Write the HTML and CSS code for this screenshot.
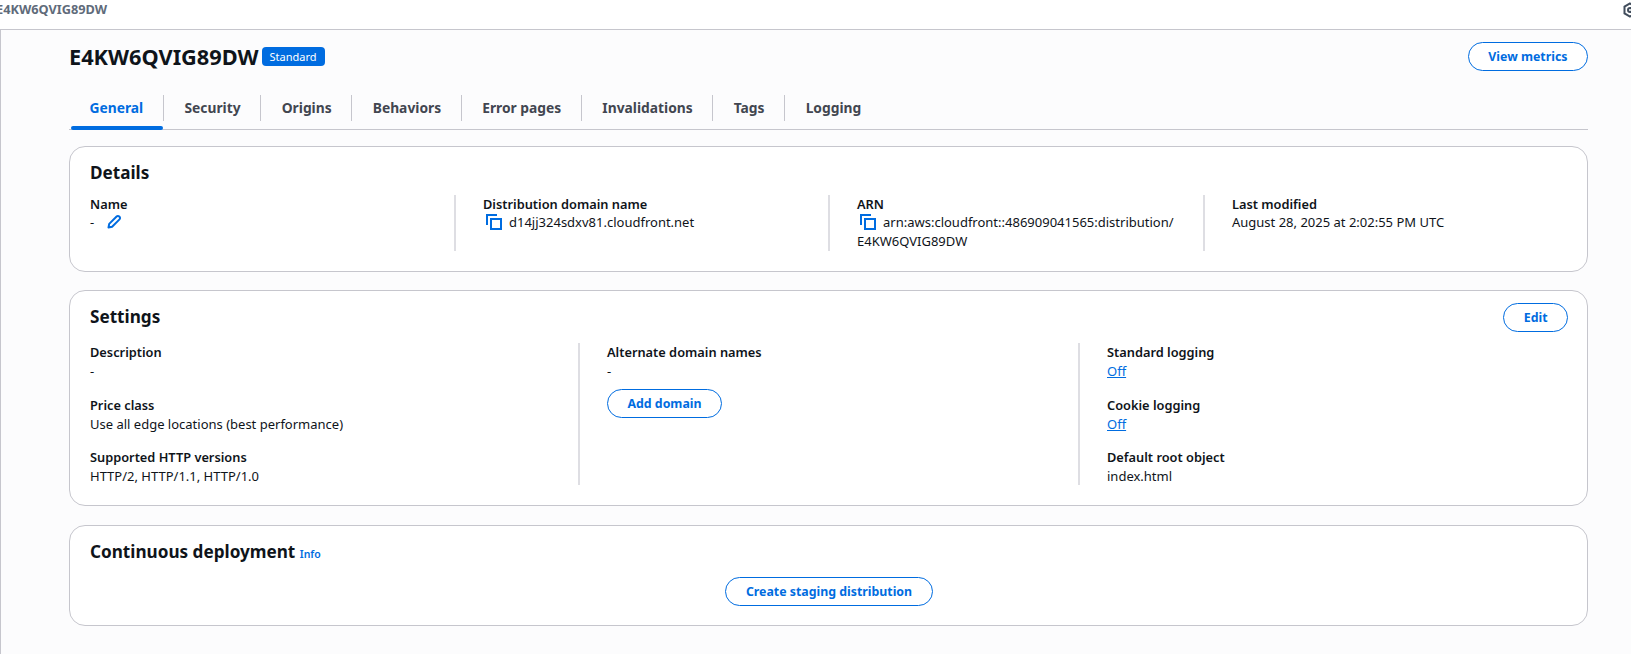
FILE: index.html
```html
<!DOCTYPE html>
<html>
<head>
  <title>E4KW6QVIG89DW</title>
  <link rel="stylesheet" href="styles.css">
</head>
<body>
  <div class="topbar">
    <span class="topbar-title">E4KW6QVIG89DW</span>
    <svg class="topbar-icon" width="16" height="16" viewBox="0 0 16 16"><path d="M8 1.5 13.5 4.7v6.6L8 14.5 2.5 11.3V4.7z" fill="none" stroke="#414d5c" stroke-width="2"/><circle cx="8" cy="8" r="2" fill="none" stroke="#414d5c" stroke-width="2"/></svg>
  </div>
  <div class="content">
    <div class="page-head">
      <div class="page-title">
        <h1>E4KW6QVIG89DW</h1>
        <span class="badge">Standard</span>
      </div>
      <button class="btn">View metrics</button>
    </div>

    <div class="tabs">
      <a class="tab active">General</a>
      <a class="tab">Security</a>
      <a class="tab">Origins</a>
      <a class="tab">Behaviors</a>
      <a class="tab">Error pages</a>
      <a class="tab">Invalidations</a>
      <a class="tab">Tags</a>
      <a class="tab">Logging</a>
    </div>

    <div class="card details">
      <h2>Details</h2>
      <div class="columns details-columns">
        <div class="col">
          <div class="field">
            <div class="label">Name</div>
            <div class="value">-
              <svg class="edit-icon" width="16" height="16" viewBox="0 0 16 16"><path d="M2.5 13.5l.7-3.6L10.6 2.5a1.8 1.8 0 0 1 2.6 0l.3.3a1.8 1.8 0 0 1 0 2.6L6.100 12.800z" fill="none" stroke="#006ce0" stroke-width="2" stroke-linejoin="round"/></svg>
            </div>
          </div>
        </div>
        <div class="col">
          <div class="field">
            <div class="label">Distribution domain name</div>
            <div class="value">
              <svg class="copy-icon" width="16" height="16" viewBox="0 0 16 16"><path d="M1 11V1h10" fill="none" stroke="#006ce0" stroke-width="2"/><rect x="5" y="5" width="10" height="10" fill="none" stroke="#006ce0" stroke-width="2"/></svg>d14jj324sdxv81.cloudfront.net
            </div>
          </div>
        </div>
        <div class="col">
          <div class="field">
            <div class="label">ARN</div>
            <div class="value">
              <svg class="copy-icon" width="16" height="16" viewBox="0 0 16 16"><path d="M1 11V1h10" fill="none" stroke="#006ce0" stroke-width="2"/><rect x="5" y="5" width="10" height="10" fill="none" stroke="#006ce0" stroke-width="2"/></svg>arn:aws:cloudfront::486909041565:distribution/<br>E4KW6QVIG89DW
            </div>
          </div>
        </div>
        <div class="col">
          <div class="field">
            <div class="label">Last modified</div>
            <div class="value">August 28, 2025 at 2:02:55 PM UTC</div>
          </div>
        </div>
      </div>
    </div>

    <div class="card settings">
      <div class="card-head">
        <h2>Settings</h2>
        <button class="btn">Edit</button>
      </div>
      <div class="columns settings-columns">
        <div class="col">
          <div class="field">
            <div class="label">Description</div>
            <div class="value">-</div>
          </div>
          <div class="field">
            <div class="label">Price class</div>
            <div class="value">Use all edge locations (best performance)</div>
          </div>
          <div class="field">
            <div class="label">Supported HTTP versions</div>
            <div class="value">HTTP/2, HTTP/1.1, HTTP/1.0</div>
          </div>
        </div>
        <div class="col">
          <div class="field">
            <div class="label">Alternate domain names</div>
            <div class="value">-</div>
          </div>
          <button class="btn add-domain">Add domain</button>
        </div>
        <div class="col">
          <div class="field">
            <div class="label">Standard logging</div>
            <div class="value"><a class="link">Off</a></div>
          </div>
          <div class="field">
            <div class="label">Cookie logging</div>
            <div class="value"><a class="link">Off</a></div>
          </div>
          <div class="field">
            <div class="label">Default root object</div>
            <div class="value">index.html</div>
          </div>
        </div>
      </div>
    </div>

    <div class="card deployment">
      <h2>Continuous deployment <a class="info">Info</a></h2>
      <div class="center">
        <button class="btn">Create staging distribution</button>
      </div>
    </div>
  </div>
</body>
</html>
```

FILE: styles.css
```css
* {
  box-sizing: border-box;
}

html, body {
  height: 100%;
}

body {
  margin: 0;
  background-color: #fff;
  color: #0f141a;
  font-family: "Noto Sans", sans-serif;
  font-size: 13px;
  line-height: 20px;
  overflow: hidden;
}

.topbar {
  display: flex;
  justify-content: space-between;
  align-items: flex-start;
  height: 30px;
  border-bottom: 1px solid #c6c6cd;
  overflow: hidden;
}

.topbar-title {
  margin: 0 0 0 -4px;
  color: #5f6b7a;
  font-size: 12.750px;
  font-weight: 700;
  line-height: 19px;
}

.topbar-icon {
  margin: 2px -7px 0 0;
}

.content {
  height: 624px;
  padding: 0 43px 0 68px;
  border-left: 1px solid #c6c6cd;
  background-color: #fcfcfd;
}

.page-head {
  display: flex;
  justify-content: space-between;
  align-items: center;
  padding-top: 12px;
}

.page-title {
  display: flex;
  align-items: center;
  gap: 3px;
}

h1 {
  margin: 0;
  font-size: 21.750px;
  font-weight: 700;
  line-height: 28px;
}

.badge {
  padding: 0 8px;
  border-radius: 4px;
  background-color: #006ce0;
  color: #fff;
  font-size: 11px;
  line-height: 19px;
}

.btn {
  height: 29px;
  padding: 0 19.500px;
  border: 1px solid #006ce0;
  border-radius: 20px;
  background-color: #fff;
  color: #006ce0;
  font-family: inherit;
  font-size: 12.350px;
  font-weight: 700;
}

.tabs {
  display: flex;
  height: 35px;
  margin: 24px 0 0 0;
  border-bottom: 1px solid #c6c6cd;
}

.tab {
  position: relative;
  height: 26px;
  padding: 0 19.600px 0 20.500px;
  border-left: 1px solid #c6c6cd;
  color: #424650;
  font-size: 13.800px;
  font-weight: 700;
  line-height: 26px;
}

.tab.active {
  width: 94px;
  border-left: 0;
  color: #006ce0;
}

.tab.active::after {
  content: "";
  position: absolute;
  left: 2px;
  right: 0;
  top: 31px;
  height: 4px;
  border-radius: 2px;
  background-color: #006ce0;
}

.card {
  margin-top: 18px;
  padding: 14px 19px 15px 20px;
  border: 1px solid #c6c6cd;
  border-radius: 16px;
  background-color: #fff;
}

.details {
  height: 126px;
  margin-top: 16px;
}

.settings {
  height: 216px;
}

.deployment {
  height: 101px;
  margin-top: 19px;
}

h2 {
  margin: 0;
  font-size: 17.150px;
  font-weight: 700;
  line-height: 24px;
}

.card-head {
  display: flex;
  justify-content: space-between;
  align-items: center;
  height: 24px;
}

.columns {
  display: grid;
}

.details-columns {
  grid-template-columns: 364px 374px 375px 1fr;
  margin-top: 10px;
}

.settings-columns {
  grid-template-columns: 488px 500px 1fr;
  margin-top: 14px;
}

.col {
  padding-left: 27px;
  border-left: 2px solid #dedee3;
}

.col:first-child {
  padding-left: 0;
  border-left: 0;
}

.details-columns .col {
  height: 56px;
}

.details-columns .value {
  line-height: 19px;
}

.settings-columns .col {
  height: 142px;
}

.field {
  margin-bottom: 14.500px;
}

.label {
  font-size: 12.800px;
  font-weight: 600;
  line-height: 18px;
}

.value {
  line-height: 20px;
  white-space: nowrap;
}

.edit-icon {
  margin-left: 8px;
  vertical-align: -3px;
}

.copy-icon {
  margin: 0 7px 0 3px;
  vertical-align: -3px;
}

.link {
  color: #006ce0;
  text-decoration: underline;
}

.info {
  color: #006ce0;
  font-size: 10.500px;
  font-weight: 600;
}

.add-domain {
  display: block;
  margin-top: -6.500px;
}

.center {
  display: flex;
  justify-content: center;
  margin-top: 11px;
}
```
